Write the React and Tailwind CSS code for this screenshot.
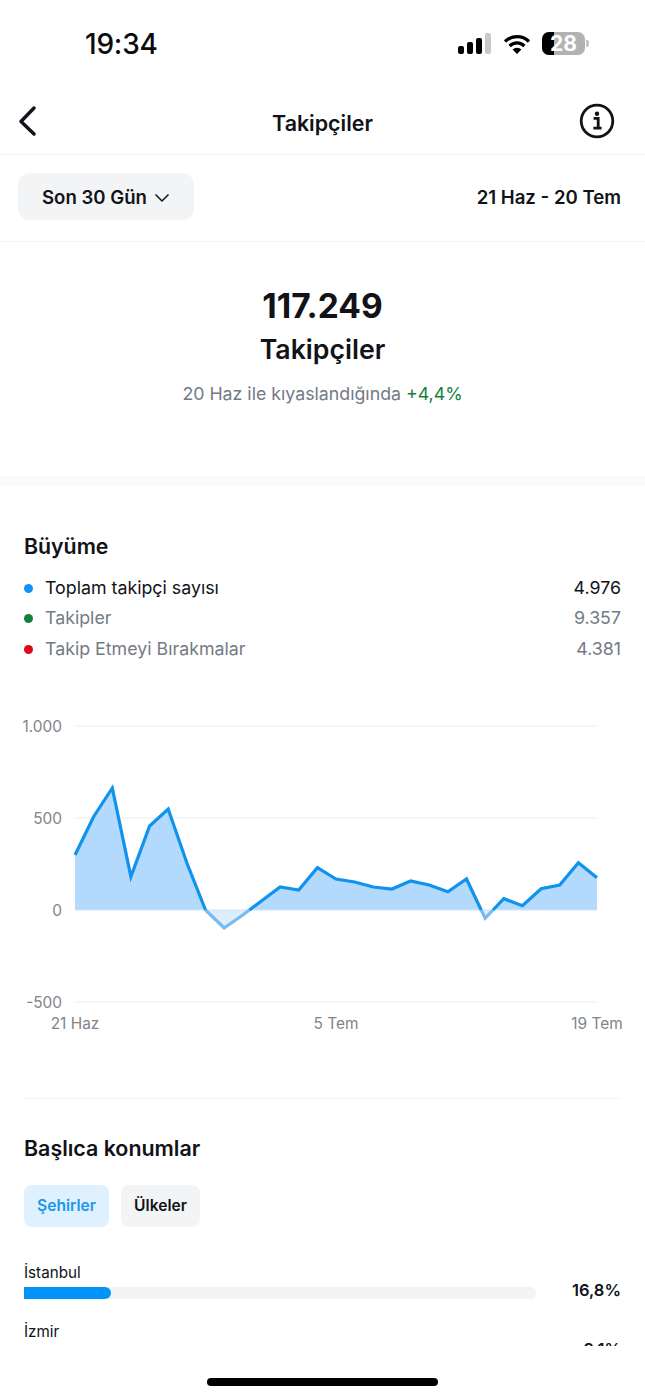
import React from "react";

const ys = [855, 816.7, 788, 876.7, 826, 809, 863, 910, 928, 915, 901, 887, 890, 867.7, 879, 882, 887, 889, 881, 885, 891.7, 879, 918.3, 898.7, 905.7, 888.7, 885, 862.7, 877.7];
const xAt = (i) => 75 + (522 * i) / 28;
const Z = 910;
const pts = ys.map((y, i) => [xAt(i), y]);

function sections() {
  const above = [];
  const below = [];
  let cur = [pts[0]];
  let pos = pts[0][1] <= Z;
  for (let i = 1; i < pts.length; i++) {
    const [x0, y0] = pts[i - 1];
    const [x1, y1] = pts[i];
    const nowPos = y1 <= Z;
    if (nowPos !== pos) {
      const t = (Z - y0) / (y1 - y0);
      const c = [x0 + (x1 - x0) * t, Z];
      cur.push(c);
      (pos ? above : below).push(cur);
      cur = [c];
      pos = nowPos;
    }
    cur.push(pts[i]);
  }
  (pos ? above : below).push(cur);
  return { above, below };
}
const { above, below } = sections();
const line = (s) => s.map((p) => p[0].toFixed(1) + "," + p[1].toFixed(1)).join(" ");
const area = (s) => line([[s[0][0], Z], ...s, [s[s.length - 1][0], Z]]);

function Chart() {
  const grid = [
    [726, "1.000"],
    [818, "500"],
    [910, "0"],
    [1002, "-500"],
  ];
  return (
    <svg width="645" height="330" viewBox="0 710 645 330" className="block -mx-6 shrink-0">
      {grid.map(([y, t]) => (
        <g key={t}>
          <line x1="75" x2="597" y1={y} y2={y} stroke="#eceef0" strokeWidth="1.2" />
          <text x="62" y={y + 6} textAnchor="end" fontSize="15.4" fill="#80848c" fontFamily="Inter, sans-serif">{t}</text>
        </g>
      ))}
      {above.map((s, i) => <polygon key={i} points={area(s)} fill="#b3d9fd" />)}
      {below.map((s, i) => <polygon key={i} points={area(s)} fill="#dcedfe" />)}
      <line x1="75" x2="597" y1="910" y2="910" stroke="#d9e9fb" strokeWidth="1.2" />
      {below.map((s, i) => <polyline key={i} points={line(s)} fill="none" stroke="#76bcf3" strokeWidth="3.2" strokeLinejoin="miter" />)}
      {above.map((s, i) => <polyline key={i} points={line(s)} fill="none" stroke="#0f93ec" strokeWidth="3.2" strokeLinejoin="miter" />)}
      <text x="75" y="1029" textAnchor="middle" fontSize="15.4" fill="#80848c" fontFamily="Inter, sans-serif">21 Haz</text>
      <text x="336" y="1029" textAnchor="middle" fontSize="15.4" fill="#80848c" fontFamily="Inter, sans-serif">5 Tem</text>
      <text x="597" y="1029" textAnchor="middle" fontSize="15.4" fill="#80848c" fontFamily="Inter, sans-serif">19 Tem</text>
    </svg>
  );
}

function LegendRow({ color, label, value, dark }) {
  return (
    <div className={"flex items-center justify-between h-[30.5px] text-[17.8px] " + (dark ? "text-[#111318]" : "text-[#747a85]")}>
      <div className="flex items-center">
        <span className="w-[9px] h-[9px] rounded-full mr-[12px]" style={{ backgroundColor: color }} />
        <span>{label}</span>
      </div>
      <span>{value}</span>
    </div>
  );
}

function StatusBar() {
  return (
    <div className="h-[88px] relative shrink-0 flex items-center justify-between pl-[85px] pr-[56px] pb-[1px]">
      <span className="text-[28px] font-medium text-[#0b0b0c] tracking-[-0.2px]">19:34</span>
      <div className="flex items-center">
        <svg width="33" height="22" viewBox="0 0 33 22" className="mr-[12px] -ml-[1px]">
          <rect x="0" y="13" width="6" height="8" rx="2" fill="#000" />
          <rect x="9" y="9" width="6" height="12" rx="2" fill="#000" />
          <rect x="18" y="5" width="6" height="16" rx="2" fill="#000" />
          <rect x="27" y="0" width="6" height="21" rx="2" fill="#c9c9c9" />
        </svg>
        <svg width="28" height="22" viewBox="0 0 28 22" className="mr-[11px]">
          <path d="M2 8.5 A17 17 0 0 1 26 8.5" fill="none" stroke="#000" strokeWidth="3.2" />
          <path d="M6.6 13 A10.5 10.5 0 0 1 21.4 13" fill="none" stroke="#000" strokeWidth="3.2" />
          <path d="M14 21 L9.6 16.6 A6 6 0 0 1 18.4 16.6 Z" fill="#000" />
        </svg>
        <div className="relative w-[43px] h-[23px] rounded-[7px] bg-[#b2b2b2] overflow-hidden flex items-center justify-center">
          <span className="absolute left-0 top-0 h-full w-[12px] bg-black" />
          <span className="relative text-[21px] leading-none font-bold text-white">28</span>
        </div>
        <span className="w-[3px] h-[7px] rounded-r-[2px] bg-[#c4c4c4] ml-[1px]" />
      </div>
    </div>
  );
}

function Header() {
  return (
    <div className="h-[67px] shrink-0 grid grid-cols-[1fr_auto_1fr] items-center px-[17px] border-b border-[#f3f4f5]">
      <svg width="22" height="30" viewBox="0 0 22 30" className="-mt-[1px]">
        <path d="M17 2 L4 15.5 L17 28" fill="none" stroke="#111318" strokeWidth="3.4" strokeLinecap="round" strokeLinejoin="round" />
      </svg>
      <span className="text-[21.4px] font-semibold text-[#111318] pt-[5px]">Takipçiler</span>
      <div className="flex justify-end pr-[13px]">
        <svg width="36" height="36" viewBox="0 0 36 36">
          <circle cx="18" cy="18" r="15.8" fill="none" stroke="#111318" strokeWidth="2.8" />
          <circle cx="18" cy="10.8" r="2.2" fill="#111318" />
          <path d="M14.6 15.4 H19.2 V24.6 M14.4 25.2 H22.6" fill="none" stroke="#111318" strokeWidth="2.8" />
        </svg>
      </div>
    </div>
  );
}

export default function App() {
  return (
    <div className="w-[645px] h-[1398px] bg-white overflow-hidden flex flex-col text-[#111318] [font-family:Inter,'Noto_Sans',sans-serif]">
      <div className="h-[1346px] overflow-hidden shrink-0 flex flex-col">
        <StatusBar />
        <Header />
        <div className="h-[87px] shrink-0 flex items-center justify-between pl-[18px] pr-[24px] border-b border-[#f3f4f5]">
          <button className="w-[176px] h-[47px] rounded-[12px] bg-[#f3f4f6] flex items-center justify-center text-[18.6px] font-semibold -mt-[4px] pt-[3px]">
            Son 30 Gün
            <svg width="16" height="10" viewBox="0 0 16 10" className="ml-[7px]">
              <path d="M1.5 1.5 L8 8 L14.5 1.5" fill="none" stroke="#111318" strokeWidth="1.5" />
            </svg>
          </button>
          <span className="text-[18.6px] font-semibold">21 Haz - 20 Tem</span>
        </div>

        <div className="h-[234px] shrink-0 flex flex-col items-center pt-[42px]">
          <div className="text-[33.5px] leading-[44px] font-bold">117.249</div>
          <div className="text-[26.7px] leading-[40px] font-semibold mt-[1px]">Takipçiler</div>
          <div className="text-[17.75px] leading-[24px] text-[#747a85] mt-[13px]">
            20 Haz ile kıyaslandığında <span className="text-[#15803d]">+4,4%</span>
          </div>
        </div>
        <div className="h-[10px] shrink-0 bg-[#fafafa]" />

        <div className="px-6 flex flex-col shrink-0">
          <div className="text-[21.3px] leading-[28px] font-semibold mt-[46px]">Büyüme</div>
          <div className="mt-[13px]">
            <LegendRow color="#0f95f0" label="Toplam takipçi sayısı" value="4.976" dark />
            <LegendRow color="#15803d" label="Takipler" value="9.357" />
            <LegendRow color="#e0071b" label="Takip Etmeyi Bırakmalar" value="4.381" />
          </div>
          <div className="mt-[45px]"><Chart /></div>
          <div className="h-px bg-[#f3f4f5] mt-[58px]" />

          <div className="text-[21.4px] leading-[28px] font-semibold mt-[35px]">Başlıca konumlar</div>
          <div className="flex gap-3 mt-[23px]">
            <span className="w-[85px] h-[42px] rounded-[8px] bg-[#dff0ff] text-[#1a97ef] text-[15.6px] font-semibold flex items-center justify-center">Şehirler</span>
            <span className="w-[79px] h-[42px] rounded-[8px] bg-[#f3f4f6] text-[15.6px] font-semibold flex items-center justify-center">Ülkeler</span>
          </div>

          <div className="mt-[36px] flex flex-col gap-[23px]">
            <div>
              <div className="text-[15.2px] leading-[20px]">İstanbul</div>
              <div className="flex items-center justify-between mt-[4px] h-[12px]">
                <div className="w-[512px] h-[12px] rounded-r-full bg-[#f3f4f6] overflow-hidden">
                  <div className="w-[87px] h-full rounded-r-full bg-[#0094fb]" />
                </div>
                <span className="text-[16.5px] leading-none font-semibold -mt-[5px]">16,8%</span>
              </div>
            </div>
            <div>
              <div className="text-[15.2px] leading-[20px]">İzmir</div>
              <div className="flex items-center justify-between mt-[4px] h-[12px]">
                <div className="w-[512px] h-[12px] rounded-r-full bg-[#f3f4f6] overflow-hidden">
                  <div className="w-[12px] h-full rounded-r-full bg-[#0094fb]" />
                </div>
                <span className="text-[16.5px] leading-none font-semibold -mt-[5px]">9,1%</span>
              </div>
            </div>
          </div>
        </div>
      </div>
      <div className="flex-1 flex justify-center">
        <div className="w-[231px] h-[8px] rounded-full bg-black mt-[32px]" />
      </div>
    </div>
  );
}
